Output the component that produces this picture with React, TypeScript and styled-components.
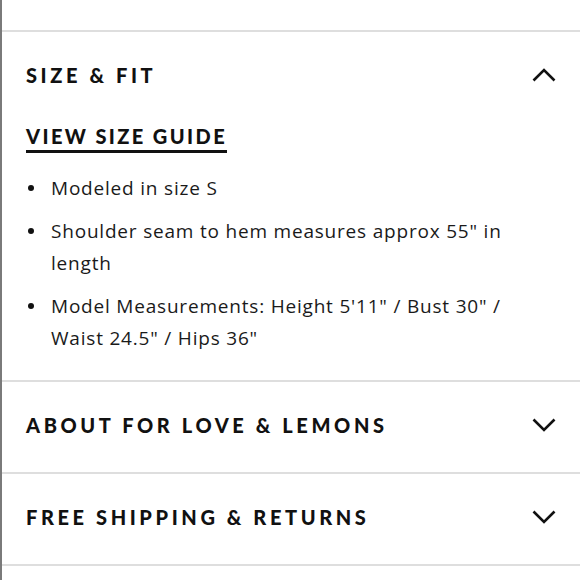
import React from 'react';
import styled, { createGlobalStyle } from 'styled-components';

const GlobalStyle = createGlobalStyle`
  html, body {
    margin: 0;
    padding: 0;
    background: #fff;
  }
  body {
    font-family: Lato, "Liberation Sans", sans-serif;
    color: #111;
  }
`;

const Page = styled.div`
  width: 580px;
  height: 580px;
  box-sizing: border-box;
  border-left: 2px solid #7a7a7a;
  padding-top: 30px;
  overflow: hidden;
`;

const Section = styled.section`
  border-top: 2px solid #dedede;
`;

const Header = styled.div`
  height: 86px;
  display: flex;
  align-items: center;
  justify-content: space-between;
  padding: 0 24px 4px 24px;
`;

const Title = styled.h2`
  margin: 0;
  font-family: Lato, "Liberation Sans", sans-serif;
  font-weight: 900;
  font-size: 20px;
  letter-spacing: 3.6px;
  color: #111;
`;

const Body = styled.div`
  padding: 4px 24px 26px 24px;
`;

const GuideLink = styled.a`
  display: inline-block;
  font-weight: 900;
  font-size: 20px;
  line-height: 20px;
  letter-spacing: 2.4px;
  color: #111;
  text-decoration: none;
  padding-bottom: 4px;
  border-bottom: 3px solid #111;
`;

const List = styled.ul`
  list-style: none;
  margin: 19px 0 0 0;
  padding: 0;
  display: flex;
  flex-direction: column;
  gap: 11px;
`;

const Item = styled.li`
  display: flex;
  font-family: "Open Sans", Lato, sans-serif;
  font-size: 19px;
  line-height: 32px;
  letter-spacing: 0.8px;
  color: #1a1a1a;
  padding-right: 30px;
`;

const Dot = styled.span`
  flex: none;
  width: 6px;
  height: 6px;
  border-radius: 50%;
  background: #111;
  margin: 13px 17px 0 2px;
`;

const Chevron = ({ up }: { up?: boolean }) => (
  <svg width="24" height="14" viewBox="0 0 24 14" fill="none">
    <polyline
      points={up ? '1.5,12.5 12,2 22.5,12.5' : '1.5,1.5 12,12 22.5,1.5'}
      stroke="#111"
      strokeWidth="2.6"
    />
  </svg>
);

const details = [
  'Modeled in size S',
  'Shoulder seam to hem measures approx 55" in length',
  'Model Measurements: Height 5\'11" / Bust 30" / Waist 24.5" / Hips 36"',
];

export default function App() {
  return (
    <Page>
      <GlobalStyle />
      <Section>
        <Header>
          <Title>SIZE &amp; FIT</Title>
          <Chevron up />
        </Header>
        <Body>
          <GuideLink href="#">VIEW SIZE GUIDE</GuideLink>
          <List>
            {details.map((d) => (
              <Item key={d}>
                <Dot />
                <span>{d}</span>
              </Item>
            ))}
          </List>
        </Body>
      </Section>
      <Section>
        <Header>
          <Title>ABOUT FOR LOVE &amp; LEMONS</Title>
          <Chevron />
        </Header>
      </Section>
      <Section>
        <Header>
          <Title>FREE SHIPPING &amp; RETURNS</Title>
          <Chevron />
        </Header>
      </Section>
      <Section />
    </Page>
  );
}
